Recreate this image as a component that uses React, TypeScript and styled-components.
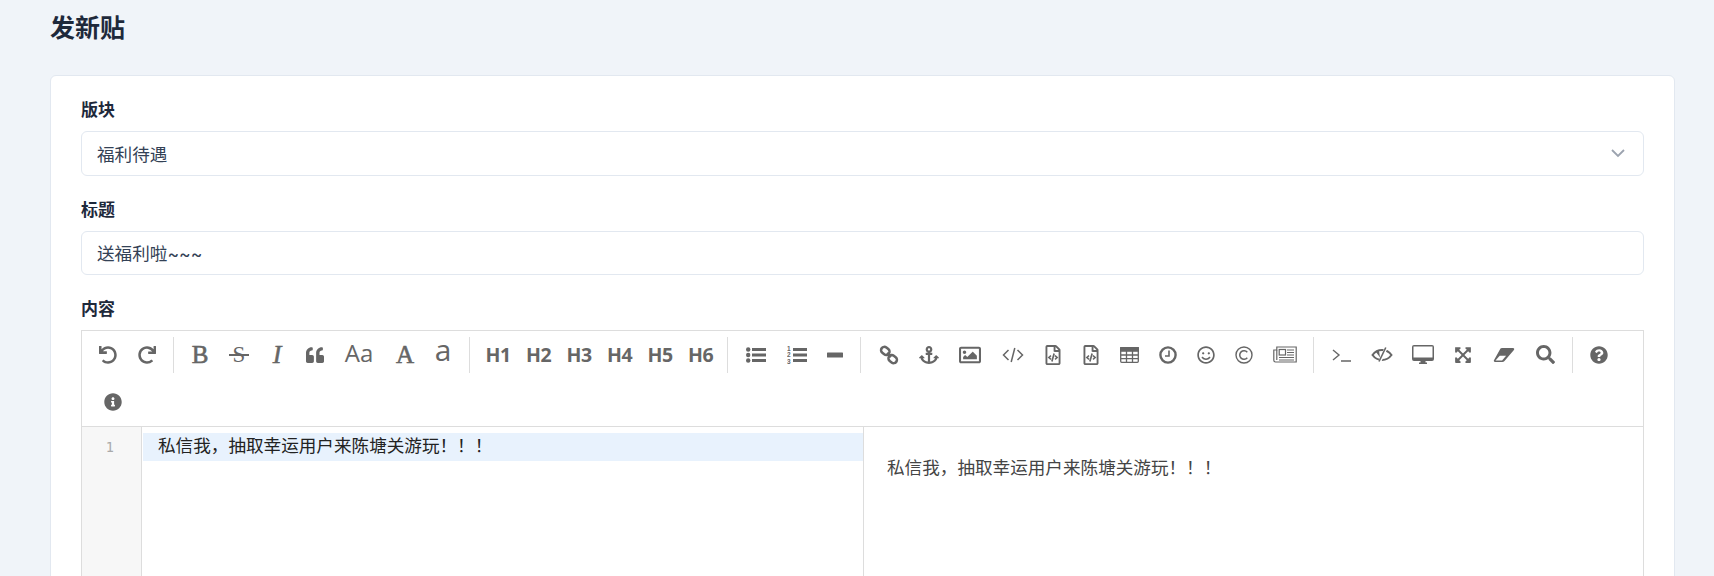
import React from "react";
import styled, { createGlobalStyle } from "styled-components";
import { FaUndo, FaRedo, FaQuoteLeft, FaAnchor, FaRegImage, FaRegFileCode, FaRegSmile, FaExpandArrowsAlt, FaSearch, FaQuestionCircle, FaInfoCircle } from "react-icons/fa";

const Global = createGlobalStyle`
  html, body { margin: 0; padding: 0; background: #f0f4f9; }
  body { font-family: Inter, "Noto Sans CJK SC", "Liberation Sans", sans-serif; font-size: 17px; color: #334155; }
  * { box-sizing: border-box; }
`;

const Page = styled.div`
  height: 576px;
  overflow: hidden;
  padding: 12px 39px 0 50px;
`;
const Title = styled.h1`
  margin: 0 0 31px;
  font-size: 25px;
  line-height: 32px;
  font-weight: 700;
  color: #1e293b;
`;
const Card = styled.div`
  background: #fff;
  border: 1px solid #e2e8f0;
  border-radius: 6px;
  padding: 22px 30px 30px;
`;
const Field = styled.div`
  margin-bottom: 22px;
`;
const Label = styled.label`
  display: block;
  height: 24px;
  line-height: 24px;
  margin-bottom: 9px;
  font-size: 17px;
  font-weight: 700;
  color: #1e293b;
`;
const Control = styled.div`
  position: relative;
  display: flex;
  align-items: center;
  height: 44.5px;
  padding: 0 15px;
  border: 1px solid #e2e8f0;
  border-radius: 6px;
  background: #fff;
  font-size: 17.6px;
  color: #334155;
`;
const Chevron = styled.svg`
  position: absolute;
  right: 17px;
  top: 15px;
`;
const Editor = styled.div`
  border: 1px solid #ddd;
  height: 600px;
`;
const Toolbar = styled.div`
  display: flex;
  flex-wrap: wrap;
  align-content: flex-start;
  height: 96px;
  padding-left: 6px;
  border-bottom: 1px solid #ddd;
`;
const Tool = styled.span<{ $w: number }>`
  display: flex;
  align-items: center;
  justify-content: center;
  flex: none;
  width: ${(p) => p.$w}px;
  height: 47.5px;
  color: #666;
  font-size: 19px;
  svg { display: block; }
`;
const Divider = styled.span<{ $l: number; $r: number }>`
  flex: none;
  width: 1px;
  height: 36px;
  margin: 6px ${(p) => p.$r}px 0 ${(p) => p.$l}px;
  background: #ddd;
`;
const SerifGlyph = styled.span<{ $size?: number; $italic?: boolean; $stroke?: number }>`
  font-family: "Liberation Serif", serif;
  font-size: ${(p) => p.$size ?? 24}px;
  font-weight: 400;
  font-style: ${(p) => (p.$italic ? "italic" : "normal")};
  -webkit-text-stroke: ${(p) => p.$stroke ?? 0}px #666;
  line-height: 1;
  color: #666;
`;
const StruckGlyph = styled(SerifGlyph)`
  position: relative;
  display: inline-block;
  width: 20px;
  text-align: center;
  &::after {
    content: "";
    position: absolute;
    left: 0;
    right: 0;
    top: 11px;
    height: 1.4px;
    background: #666;
  }
`;
const ThinGlyph = styled.span<{ $size: number; $top?: number }>`
  font-family: "Open Sans", "Liberation Sans", sans-serif;
  font-size: ${(p) => p.$size}px;
  font-weight: 400;
  line-height: 1;
  color: #666;
  position: relative;
  top: ${(p) => p.$top ?? -2}px;
`;
const Heading = styled.span`
  font-family: "Noto Sans", "Open Sans", sans-serif;
  font-size: 19.5px;
  font-weight: 700;
  letter-spacing: -0.3px;
  color: #666;
  line-height: 1;
`;
const Panes = styled.div`
  display: flex;
  height: 500px;
`;
const Code = styled.div`
  display: flex;
  width: 782px;
  flex: none;
  border-right: 1px solid #ddd;
`;
const Gutter = styled.div`
  width: 60px;
  flex: none;
  background: #f7f7f7;
  border-right: 1px solid #ddd;
  padding: 9px 27px 0 0;
  text-align: right;
  font-family: "DejaVu Sans Mono", "Liberation Mono", monospace;
  font-size: 13.5px;
  line-height: 22px;
  color: #aaa;
`;
const CodeBody = styled.div`
  flex: 1;
  padding: 6px 0 0 1px;
`;
const ActiveLine = styled.div`
  height: 28px;
  padding-left: 15px;
  background: #e8f2fd;
  color: #222;
  font-size: 17.6px;
  line-height: 26px;
`;
const Preview = styled.div`
  flex: 1;
  padding: 27px 23px;
  font-size: 17.6px;
  line-height: 27px;
  color: #444;
`;

const ic = (n: number) => ({ size: n });
const C = "#666";

const LinkIcon = () => (
  <svg width="20" height="20" viewBox="0 0 20 20" fill="none" stroke={C} strokeWidth="2.5">
    <rect x="1.8" y="2.6" width="9" height="6.6" rx="3.3" transform="rotate(38 6.3 5.9)" />
    <rect x="9.2" y="10.8" width="9" height="6.6" rx="3.3" transform="rotate(38 13.7 14.1)" />
    <path d="M8 8l4 4" />
  </svg>
);
const CodeIcon = () => (
  <svg width="22" height="16" viewBox="0 0 22 16" fill="none" stroke={C} strokeWidth="1.5">
    <path d="M6.5 3L1.5 8l5 5M15.5 3l5 5-5 5M12.8 1L9.2 15" />
  </svg>
);
const TerminalIcon = () => (
  <svg width="20" height="16" viewBox="0 0 20 16" fill="none" stroke={C} strokeWidth="1.4">
    <path d="M1 3l6 5-6 5M9 14h10" />
  </svg>
);
const EyeOffIcon = () => (
  <svg width="22" height="18" viewBox="0 0 22 18" fill="none" stroke={C} strokeWidth="2">
    <path d="M1.5 9C4 5.6 7.4 4 11 4c3.6 0 7 1.6 9.5 5-2.500 3.4-5.9 5-9.5 5S4 12.4 1.5 9z" />
    <path d="M5 6l3-1.500 1 7z" fill={C} stroke="none" />
    <path d="M15.5 1L8.500 16" strokeWidth="3" stroke="#fff" />
    <path d="M14.8 1.500L8 15.5" strokeWidth="1.6" />
  </svg>
);
const UlIcon = () => (
  <svg width="20" height="16" viewBox="0 0 20 16" fill={C}>
    <circle cx="2.2" cy="2.5" r="2.2" />
    <circle cx="2.2" cy="8" r="2.2" />
    <circle cx="2.2" cy="13.5" r="2.2" />
    <rect x="6" y="1" width="14" height="3" />
    <rect x="6" y="6.5" width="14" height="3" />
    <rect x="6" y="12" width="14" height="3" />
  </svg>
);
const OlIcon = () => (
  <svg width="20" height="20" viewBox="0 0 20 20" fill={C}>
    <text x="0" y="6" fontSize="6.5" fontWeight="700" fontFamily="Liberation Sans, sans-serif">1</text>
    <text x="0" y="12" fontSize="6.5" fontWeight="700" fontFamily="Liberation Sans, sans-serif">2</text>
    <text x="0" y="18.5" fontSize="6.5" fontWeight="700" fontFamily="Liberation Sans, sans-serif">3</text>
    <rect x="6" y="3" width="14" height="3" />
    <rect x="6" y="8.5" width="14" height="3" />
    <rect x="6" y="14" width="14" height="3" />
  </svg>
);
const HrIcon = () => (
  <svg width="16" height="6" viewBox="0 0 16 6" fill={C}>
    <rect x="0" y="0.5" width="16" height="5" rx="0.6" />
  </svg>
);
const TableIcon = () => (
  <svg width="19" height="16" viewBox="0 0 19 16" fill="none" stroke={C} strokeWidth="1.3">
    <rect x="0.7" y="0.7" width="17.6" height="14.6" rx="1" />
    <rect x="0.7" y="0.7" width="17.6" height="3.4" fill={C} />
    <path d="M6.5 4v11M12.5 4v11M1 8h17M1 11.7h17" />
  </svg>
);
const ClockIcon = () => (
  <svg width="18" height="18" viewBox="0 0 18 18" fill="none" stroke={C}>
    <circle cx="9" cy="9" r="7.6" strokeWidth="2.4" />
    <path d="M10 4.5V10H6" strokeWidth="1.6" />
  </svg>
);
const CopyIcon = () => (
  <svg width="18" height="18" viewBox="0 0 18 18" fill="none" stroke={C} strokeWidth="1.4">
    <circle cx="9" cy="9" r="8" />
    <path d="M12.3 6.2a4.3 4.3 0 1 0 0 5.6" strokeWidth="1.5" />
  </svg>
);
const NewsIcon = () => (
  <svg width="24" height="17" viewBox="0 0 24 17" fill="none" stroke={C} strokeWidth="1.2">
    <path d="M3.8 1h19.4v15H2.5A1.700 1.700 0 0 1 .8 14.3V4h3z" />
    <path d="M3.8 4v10" />
    <rect x="6.2" y="3.5" width="6.3" height="5.5" />
    <path d="M14 4h7M14 6.5h7M14 9h7M6 11.5h15M6 14h15" />
  </svg>
);
const DesktopIcon = () => (
  <svg width="22" height="20" viewBox="0 0 22 20" fill={C}>
    <path fillRule="evenodd" d="M2 0h18a2 2 0 0 1 2 2v12a2 2 0 0 1-2 2H2a2 2 0 0 1-2-2V2a2 2 0 0 1 2-2zm-.5 1.5V12.5h19V1.5z" />
    <path d="M8.5 16h5v1.5h1.5V19H7v-1.5h1.5z" />
  </svg>
);
const EraserIcon = () => (
  <svg width="22" height="16" viewBox="0 0 22 16" fill={C}>
    <path d="M7.5 1.5a2 2 0 0 1 1.4-.6H20a1.2 1.2 0 0 1 .9 2L11.5 14a3 3 0 0 1-2.3 1H2a1.2 1.2 0 0 1-.9-2z" />
    <path d="M2.5 13.6h6.6l4-4.800H6.700z" fill="#fff" />
  </svg>
);

type Item = { k: "tool"; w: number; node: React.ReactNode } | { k: "div"; l: number; r: number };

const t = (w: number, node: React.ReactNode): Item => ({ k: "tool", w, node });
const d = (l: number, r: number): Item => ({ k: "div", l, r });
const h = (s: string): Item => t(40.5, <Heading>{s}</Heading>);

const items: Item[] = [
  t(40, <FaUndo {...ic(18)} />),
  t(38, <FaRedo {...ic(18)} />),
  d(7, 7),
  t(38, <SerifGlyph $size={25} $stroke={0.6}>B</SerifGlyph>),
  t(40, <StruckGlyph $size={23}>S</StruckGlyph>),
  t(36, <SerifGlyph $size={26} $italic $stroke={0.5}>I</SerifGlyph>),
  t(40, <FaQuoteLeft {...ic(18)} />),
  t(48, <ThinGlyph $size={24}>Aa</ThinGlyph>),
  t(44, <SerifGlyph $size={25} $stroke={0.6}>A</SerifGlyph>),
  t(32, <ThinGlyph $size={30} $top={-5}>a</ThinGlyph>),
  d(10, 8),
  h("H1"), h("H2"), h("H3"), h("H4"), h("H5"), h("H6"),
  d(6, 8),
  t(40, <UlIcon />),
  t(41, <OlIcon />),
  t(36, <HrIcon />),
  d(7, 8),
  t(40, <LinkIcon />),
  t(40, <FaAnchor {...ic(20)} />),
  t(42, <FaRegImage {...ic(22)} />),
  t(44, <CodeIcon />),
  t(36, <FaRegFileCode {...ic(20)} />),
  t(40, <FaRegFileCode {...ic(20)} />),
  t(36, <TableIcon />),
  t(42, <ClockIcon />),
  t(34, <FaRegSmile {...ic(18)} />),
  t(42, <CopyIcon />),
  t(40, <NewsIcon />),
  d(8, 8),
  t(40, <TerminalIcon />),
  t(40, <EyeOffIcon />),
  t(42, <DesktopIcon />),
  t(38, <FaExpandArrowsAlt {...ic(18)} />),
  t(44, <EraserIcon />),
  t(38, <FaSearch {...ic(19)} />),
  d(8, 8),
  t(36, <FaQuestionCircle {...ic(18)} />),
  t(50, <FaInfoCircle {...ic(18)} />),
];

const TEXT = "私信我，抽取幸运用户来陈塘关游玩！！！";

export default function App() {
  return (
    <Page>
      <Global />
      <Title>发新贴</Title>
      <Card>
        <Field>
          <Label>版块</Label>
          <Control>
            福利待遇
            <Chevron width="16" height="12" viewBox="0 0 16 12" fill="none" stroke="#9ca3af" strokeWidth="1.8">
              <path d="M2 3l6 6 6-6" />
            </Chevron>
          </Control>
        </Field>
        <Field>
          <Label>标题</Label>
          <Control>送福利啦~~~</Control>
        </Field>
        <Label>内容</Label>
        <Editor>
          <Toolbar>
            {items.map((it, i) =>
              it.k === "div" ? (
                <Divider key={i} $l={it.l} $r={it.r} />
              ) : (
                <Tool key={i} $w={it.w}>
                  {it.node}
                </Tool>
              )
            )}
          </Toolbar>
          <Panes>
            <Code>
              <Gutter>1</Gutter>
              <CodeBody>
                <ActiveLine>{TEXT}</ActiveLine>
              </CodeBody>
            </Code>
            <Preview>{TEXT}</Preview>
          </Panes>
        </Editor>
      </Card>
    </Page>
  );
}
